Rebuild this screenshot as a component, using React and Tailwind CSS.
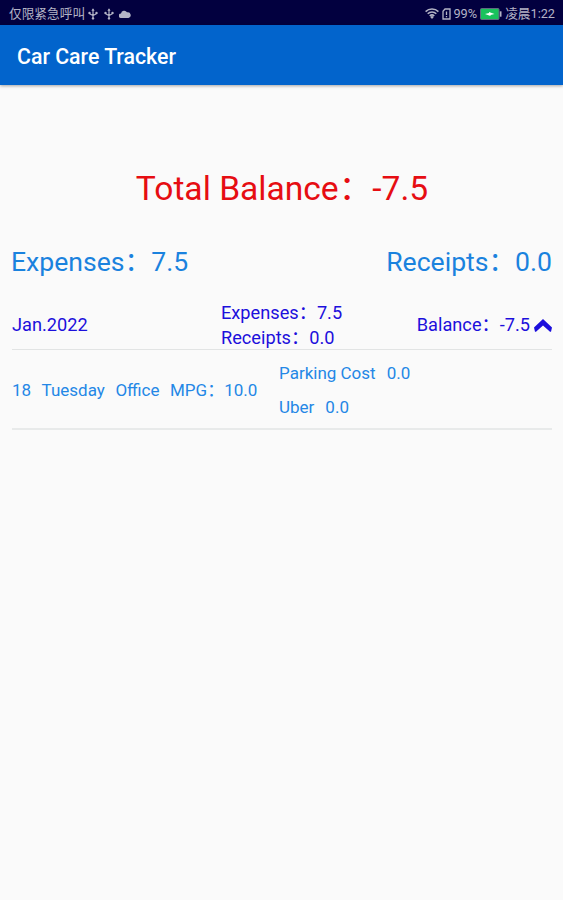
const totals = { balance: "-7.5", expenses: "7.5", receipts: "0.0" };

const month = { label: "Jan.2022", expenses: "7.5", receipts: "0.0", balance: "-7.5" };

const entries = [
  {
    day: "18",
    weekday: "Tuesday",
    place: "Office",
    mpg: "10.0",
    costs: [
      { name: "Parking Cost", value: "0.0" },
      { name: "Uber", value: "0.0" },
    ],
  },
];

function UsbIcon({ className }) {
  return (
    <svg viewBox="0 0 10 12" className={`h-3 w-2.5 ${className}`} fill="none" stroke="currentColor" strokeWidth="1.2">
      <path d="M5 1.5v9M1.5 4.5v1.2L5 7.5l3.5-1.8V4.5" />
      <path d="M5 .3 6.6 2.8H3.4z" fill="currentColor" stroke="none" />
      <circle cx="5" cy="10.4" r="1.2" fill="currentColor" stroke="none" />
      <circle cx="1.5" cy="4.9" r="1.2" fill="currentColor" stroke="none" />
      <circle cx="8.5" cy="4.9" r="1.2" fill="currentColor" stroke="none" />
    </svg>
  );
}

function StatusBar() {
  return (
    <div className="flex h-[25px] items-center justify-between bg-[#02003f] pt-[3px] pr-2 pl-[9px] text-[#b4b4c6]">
      <div className="flex items-center">
        <span className="text-[12.7px] leading-none">仅限紧急呼叫</span>
        <UsbIcon className="ml-[3px]" />
        <UsbIcon className="ml-1.5" />
        <svg viewBox="0 0 12 8" className="ml-[5px] h-2 w-3" fill="currentColor">
          <path d="M2.3 8A2.2 2.2 0 0 1 2 3.4 3.3 3.3 0 0 1 8 2.3 2.9 2.9 0 0 1 9.5 8z" />
        </svg>
      </div>
      <div className="flex items-center">
        {/* wifi */}
        <svg viewBox="0 0 14 11" className="h-[11px] w-3.5" fill="none" stroke="currentColor" strokeWidth="1.5">
          <path d="M.6 3.600a9 9 0 0 1 12.800 0M2.700 5.800a6 6 0 0 1 8.600 0M4.700 8a3.300 3.300 0 0 1 4.600 0" />
          <path d="M7 11 5.200 9a2.500 2.500 0 0 1 3.600 0z" fill="currentColor" stroke="none" />
        </svg>
        {/* sim missing */}
        <svg viewBox="0 0 9 12" className="ml-[3px] h-3 w-[9px]" fill="none" stroke="currentColor" strokeWidth="1.3">
          <path d="M1 3.200 3 1h5v10H1z" />
          <path d="M4.500 3.500v3.500M4.500 8v1.300" />
        </svg>
        <span className="ml-0.5 text-[12.8px] leading-none">99%</span>
        {/* battery */}
        <svg viewBox="0 0 22 12" className="ml-[3px] h-3 w-[22px]">
          <rect x=".5" y=".5" width="18.5" height="11" rx="1" fill="#19c25c" stroke="#5f6b80" />
          <rect x="19.8" y="3.3" width="1.7" height="5.4" fill="currentColor" />
          <path d="M5 6 9 5V4l5.500 2L10.500 7v1z" fill="#fff" />
        </svg>
        <span className="ml-[3px] text-[12.7px] leading-none">凌晨1:22</span>
      </div>
    </div>
  );
}

function Amount({ label, value, className = "" }) {
  return (
    <span className={`whitespace-pre ${className}`}>
      {label}：{value}
    </span>
  );
}

export default function App() {
  return (
    <div className="min-h-[900px] bg-[#fafafa] font-['Roboto','Noto_Sans_CJK_SC',sans-serif]">
      <StatusBar />
      <header className="flex h-[60px] items-center bg-[#0264cc] px-[17px] pt-[3px] shadow-[0_1px_3px_rgba(0,0,0,0.35)]">
        <h1 className="text-[21.3px] leading-none font-medium text-white">Car Care Tracker</h1>
      </header>

      <main className="pr-[11px] pl-3">
        <div className="mt-[69px] flex h-[70px] items-center justify-center text-[33.6px] leading-none text-[#e60d12]">
          <Amount label="Total Balance" value={totals.balance} />
        </div>

        <div className="mt-[18px] flex h-10 items-center justify-between text-[26.6px] leading-none text-[#1a82de]">
          <Amount label="Expenses" value={totals.expenses} className="-ml-px" />
          <Amount label="Receipts" value={totals.receipts} />
        </div>

        <div className="mt-[19px] flex h-[49px] items-center border-b border-[#e2e4e4] text-[18.2px] leading-[25px] text-[#1c0fdc]">
          <span className="w-[209px] pb-px">{month.label}</span>
          <div className="flex flex-1 flex-col">
            <Amount label="Expenses" value={month.expenses} />
            <Amount label="Receipts" value={month.receipts} />
          </div>
          <Amount label="Balance" value={month.balance} className="pb-px" />
          <svg viewBox="0 0 18 13" className="ml-1 h-[13px] w-[18px]" fill="currentColor">
            <path d="M9 0 18 8.500l-1 4.200h-1L9 6.500l-7 6.200H1L0 8.500z" />
          </svg>
        </div>

        {entries.map((entry) => (
          <div
            key={entry.day}
            className="flex h-[80px] items-center border-b-2 border-[#e8eaea] pt-0.5 text-[17px] leading-[34px] text-[#2487e6]"
          >
            <div className="flex w-[267px] gap-[10.5px]">
              <span>{entry.day}</span>
              <span>{entry.weekday}</span>
              <span>{entry.place}</span>
              <Amount label="MPG" value={entry.mpg} />
            </div>
            <div className="flex flex-col">
              {entry.costs.map((cost) => (
                <div key={cost.name} className="flex gap-[11px]">
                  <span>{cost.name}</span>
                  <span>{cost.value}</span>
                </div>
              ))}
            </div>
          </div>
        ))}
      </main>
    </div>
  );
}
